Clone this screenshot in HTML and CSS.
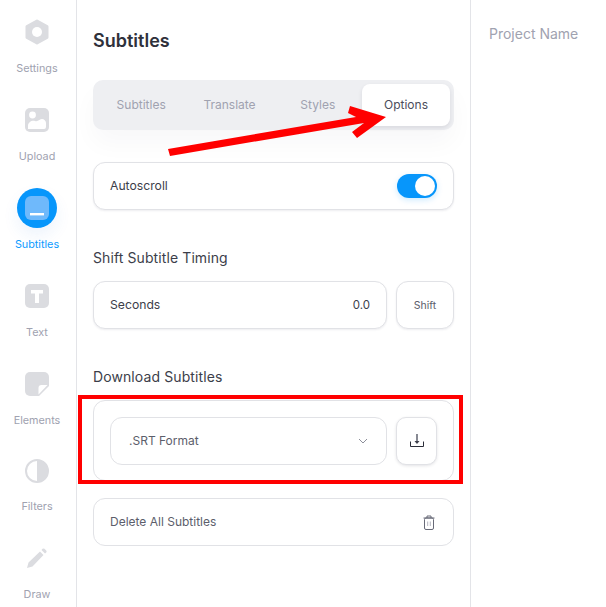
FILE: index.html
```html
<!DOCTYPE html>
<html lang="en">
<head>
    <meta charset="UTF-8">
    <meta name="viewport" content="width=device-width, initial-scale=1.0">
    <title>Subtitles</title>
    <link rel="stylesheet" href="styles.css">
</head>
<body>

    <!-- Left tool menu -->
    <nav class="sidebar">
        <div class="nav-item">
            <div class="nav-icon">
                <svg width="24" height="26" viewBox="0 0 24 26"><path fill-rule="evenodd" fill="#dbdce0" stroke="#dbdce0" stroke-width="3" stroke-linejoin="round" d="M12 2 L22 7.5 V18.5 L12 24 L2 18.5 V7.5 Z"/><circle cx="12" cy="13" r="5" fill="#fff"/></svg>
            </div>
            <span>Settings</span>
        </div>
        <div class="nav-item">
            <div class="nav-icon">
                <svg width="24" height="24" viewBox="0 0 24 24"><rect width="24" height="24" rx="5" fill="#dbdce0"/><circle cx="7.5" cy="7" r="3.4" fill="#fff"/><path fill="#fff" d="M3 21 V18 C3 14 7 12 10 13 C13 14 15 11 17 11 C19 11 21 13 21 15 V19 A2 2 0 0 1 19 21 Z"/></svg>
            </div>
            <span>Upload</span>
        </div>
        <div class="nav-item active">
            <div class="nav-icon">
                <div class="nav-circle">
                    <svg width="24" height="24" viewBox="0 0 24 24"><rect width="24" height="24" rx="6" fill="#6fb9fb"/><rect x="5" y="17" width="14" height="2.4" fill="#fff"/></svg>
                </div>
            </div>
            <span>Subtitles</span>
        </div>
        <div class="nav-item">
            <div class="nav-icon">
                <svg width="24" height="24" viewBox="0 0 24 24"><rect width="24" height="24" rx="5" fill="#dbdce0"/><path fill="#fff" d="M6 6 H18 V9.5 H14 V19 H10 V9.5 H6 Z"/></svg>
            </div>
            <span>Text</span>
        </div>
        <div class="nav-item">
            <div class="nav-icon">
                <svg width="24" height="24" viewBox="0 0 24 24"><path fill="#dbdce0" d="M5 0 H19 A5 5 0 0 1 24 5 V14 L14 24 H5 A5 5 0 0 1 0 19 V5 A5 5 0 0 1 5 0 Z"/><path fill="#fff" d="M22.5 13 L13.5 22.5 V16 A3 3 0 0 1 16.5 13 Z"/></svg>
            </div>
            <span>Elements</span>
        </div>
        <div class="nav-item filters">
            <div class="nav-icon">
                <svg width="24" height="24" viewBox="0 0 24 24"><circle cx="12" cy="12" r="11" fill="#fff" stroke="#dbdce0" stroke-width="2"/><path fill="#dbdce0" d="M12 1 A11 11 0 0 1 12 23 Z"/></svg>
            </div>
            <span>Filters</span>
        </div>
        <div class="nav-item">
            <div class="nav-icon">
                <svg width="20" height="20" viewBox="0 0 20 20"><path fill="#dbdce0" d="M0 20 L1.5 14.5 L13 3.5 L16.5 7 L5.5 18.5 Z M14.5 2 L15.5 0.8 A1.6 1.6 0 0 1 17.5 0.8 L19.2 2.5 A1.6 1.6 0 0 1 19.2 4.5 L18 5.5 Z"/></svg>
            </div>
            <span>Draw</span>
        </div>
    </nav>

    <!-- Main panel -->
    <main class="panel">
        <h1 class="panel-title">Subtitles</h1>

        <div class="tabs">
            <div class="tab">Subtitles</div>
            <div class="tab">Translate</div>
            <div class="tab">Styles</div>
            <div class="tab active">Options</div>
        </div>

        <div class="card row autoscroll">
            <span>Autoscroll</span>
            <div class="toggle"><div class="knob"></div></div>
        </div>

        <h2 class="section-title">Shift Subtitle Timing</h2>
        <div class="shift-row">
            <div class="card row seconds">
                <span>Seconds</span>
                <span class="seconds-value">0.0</span>
            </div>
            <button class="shift-btn">Shift</button>
        </div>

        <h2 class="section-title">Download Subtitles</h2>
        <div class="card download">
            <div class="select">
                <span>.SRT Format</span>
                <svg width="10" height="6" viewBox="0 0 10 6"><path d="M1 1 L5 5 L9 1" fill="none" stroke="#8d8f9a" stroke-width="1"/></svg>
            </div>
            <button class="icon-btn">
                <svg width="14" height="14" viewBox="0 0 14 14"><path d="M7 0 V8" stroke="#6a6c78" stroke-width="1.6" fill="none"/><path d="M4.5 7 H9.5 L7 10 Z" fill="#3c3e4a"/><path d="M0.5 7.5 V12.5 H13.5 V7.5" stroke="#2b2d38" stroke-width="1" fill="none"/></svg>
            </button>
        </div>

        <div class="card row delete">
            <span>Delete All Subtitles</span>
            <svg width="12" height="15" viewBox="0 0 12 15"><path d="M0.5 3 H11.5 M4 3 V1 H8 V3" stroke="#686a78" stroke-width="1" fill="none"/><rect x="1.5" y="3" width="9" height="11.5" rx="1.5" stroke="#686a78" stroke-width="1" fill="none"/><path d="M4.7 6.5 V11 M7.3 6.5 V11" stroke="#b5b6c0" stroke-width="1"/></svg>
        </div>
    </main>

    <aside class="project">Project Name</aside>

    <!-- Red annotations drawn over the screenshot -->
    <svg class="arrow" width="220" height="60" viewBox="0 0 220 60">
        <path fill="#ff0000" d="M0 49 L188 17 L180 13 L182 6 L218 17 L189 38 L184 32 L196 23 L2 56 Z"/>
    </svg>
    <div class="red-box"></div>

</body>
</html>
```

FILE: styles.css
```css
* {
    box-sizing: border-box;
}

html, body {
    height: 100%;
}

body {
    margin: 0;
    display: flex;
    overflow: hidden;
    font-family: Inter, "Noto Sans", sans-serif;
    background-color: #fff;
    color: #3c3e4a;
}

/* Left menu */
.sidebar {
    width: 77px;
    flex-shrink: 0;
    padding: 20px 2px 0 0;
    border-right: 1px solid #e3e4e8;
    display: flex;
    flex-direction: column;
    align-items: center;
    gap: 31px;
}

.nav-item {
    display: flex;
    flex-direction: column;
    align-items: center;
    gap: 17px;
    font-size: 10.8px;
    line-height: 16px;
    color: #a0a2b0;
}

.nav-item.active {
    color: #0d9bff;
}

.nav-item.filters {
    margin-top: -1px;
    gap: 16px;
}

.nav-icon {
    width: 24px;
    height: 24px;
    display: flex;
    align-items: center;
    justify-content: center;
}

.nav-circle {
    flex-shrink: 0;
    width: 40px;
    height: 40px;
    border-radius: 50%;
    background-color: #0796fb;
    box-shadow: 0 8px 16px rgba(40, 120, 220, 0.08);
    display: flex;
    align-items: center;
    justify-content: center;
}

/* Main panel */
.panel {
    width: 394px;
    flex-shrink: 0;
    padding: 30px 16px 0;
    border-right: 1px solid #e3e4e8;
}

.panel-title {
    margin: 0 0 28px;
    font-size: 18px;
    line-height: 22px;
    font-weight: 600;
    color: #2f313b;
}

.tabs {
    height: 50px;
    padding: 4px;
    border-radius: 10px;
    background-color: #eeeff2;
    display: flex;
    box-shadow: 0 14px 24px rgba(30, 30, 60, 0.03);
}

.tab {
    flex: 1;
    padding-bottom: 2px;
    display: flex;
    align-items: center;
    justify-content: center;
    font-size: 12px;
    color: #a0a2b0;
}

.tab.active {
    flex: 0 0 88px;
    border-radius: 8px;
    background-color: #fff;
    color: #4b4d5b;
    box-shadow: 0 2px 4px rgba(30, 30, 60, 0.1);
}

.card {
    border: 1px solid #e1e2e6;
    border-radius: 12px;
    background-color: #fff;
}

.row {
    height: 48px;
    padding: 0 16px;
    display: flex;
    align-items: center;
    justify-content: space-between;
    font-size: 12.2px;
}

.row > span {
    margin-bottom: 2px;
}

.autoscroll {
    margin-top: 32px;
    box-shadow: 0 1px 2px rgba(30, 30, 60, 0.08);
}

.toggle {
    width: 40px;
    height: 24px;
    border-radius: 12px;
    background-color: #0796fb;
    padding: 2px;
    display: flex;
    justify-content: flex-end;
    box-shadow: 0 2px 6px rgba(7, 150, 251, 0.2);
}

.knob {
    width: 20px;
    height: 20px;
    border-radius: 50%;
    background-color: #fff;
}

.section-title {
    margin: 39px 0 14px;
    font-size: 14px;
    line-height: 18px;
    font-weight: 400;
    letter-spacing: 0.1px;
    color: #3c3e4a;
}

.shift-row {
    display: flex;
    gap: 9px;
}

.seconds {
    flex: 1;
    box-shadow: 0 1px 2px rgba(30, 30, 60, 0.08);
}

.row > .seconds-value {
    margin-bottom: 0;
    font-size: 11.5px;
}

.shift-btn {
    width: 58px;
    height: 48px;
    border: 1px solid #e1e2e6;
    border-radius: 12px;
    background-color: #fff;
    font-family: inherit;
    font-size: 10.5px;
    color: #5c5e6b;
    box-shadow: 0 1px 2px rgba(30, 30, 60, 0.08);
}

.download {
    height: 81px;
    padding: 16px;
    display: flex;
    gap: 9px;
}

.select {
    flex: 1;
    height: 48px;
    padding: 0 18px;
    border: 1px solid #e1e2e6;
    border-radius: 12px;
    display: flex;
    align-items: center;
    justify-content: space-between;
    font-size: 12px;
    color: #5c5e6b;
}

.select span {
    margin-bottom: 2px;
}

.icon-btn {
    width: 41px;
    height: 48px;
    padding: 0;
    border: 1px solid #e1e2e6;
    border-radius: 10px;
    background-color: #fff;
    display: flex;
    align-items: center;
    justify-content: center;
    box-shadow: 0 1px 3px rgba(30, 30, 60, 0.12);
}

.delete {
    margin-top: 17px;
    padding-right: 18px;
    font-size: 12px;
    color: #5c5e6b;
}

.project {
    padding: 25px 18px;
    font-size: 14px;
    line-height: 17px;
    color: #a0a2b0;
}

/* Annotations */
.arrow {
    position: absolute;
    left: 168px;
    top: 100px;
}

.red-box {
    position: absolute;
    left: 78px;
    top: 395px;
    width: 385px;
    height: 89px;
    border: 4px solid #ff0000;
}
```
